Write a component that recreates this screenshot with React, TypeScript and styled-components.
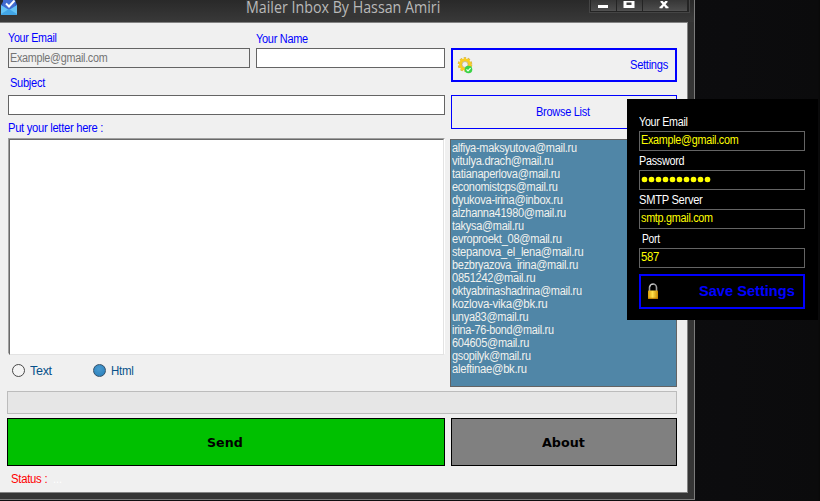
import React, { useLayoutEffect, useRef, useState } from "react";
import styled, { createGlobalStyle } from "styled-components";

const GlobalStyle = createGlobalStyle`
  * { box-sizing: border-box; }
  html, body { margin: 0; padding: 0; overflow: hidden; }
  body { background: #0c0c0e; font-family: "Liberation Sans", Arial, sans-serif; font-size: 12px; line-height: 14px; letter-spacing: -0.3px; }
`;

const Desktop = styled.div`
  position: relative;
  width: 820px;
  height: 501px;
  overflow: hidden;
  background: linear-gradient(90deg, #101012 0, #0c0c0e 730px, #0b0b0c 818px, #080808 820px);
`;

const Window = styled.main`
  width: 695px;
  height: 500px;
  background: #353535;
  border-right: 1px solid #7b7b7b;
  border-bottom: 1px solid #7b7b7b;
`;

const TitleBar = styled.header`
  display: flex;
  height: 22px;
  background: linear-gradient(#292929, #393939);
`;

const AppIcon = styled.svg`
  display: block;
  width: 246px;
  height: 17px;
  flex: none;
`;

const Title = styled.h1`
  margin: 0;
  width: 194px;
  height: 16px;
  background: #363636;
  color: #b9b9b9;
  font: 400 15.5px/15px "Open Sans", "Noto Sans", sans-serif;
  letter-spacing: 0;
`;

const Controls = styled.div`
  display: flex;
  gap: 1px;
  height: 13px;
  margin-left: 149px;
  padding: 0 2px 1px 1px;
  background: #242424;
  border: 1px solid #454545;
  border-top: 0;
`;

const ControlButton = styled.button<{ $width: number }>`
  display: block;
  width: ${(p) => p.$width}px;
  height: 11px;
  padding: 0 2px 0 0;
  border: 0;
  border-bottom: 1px solid #505050;
  background: linear-gradient(#363636, #4b4b4b);
  svg { display: block; margin: 0 auto; }
`;

const Client = styled.section`
  display: flex;
  flex-direction: column;
  width: 688px;
  height: 471px;
  background: #f0f0f0;
  border: 1px solid #838383;
  border-left: 0;
`;

const Columns = styled.div`
  display: grid;
  grid-template-columns: 437px 227px;
  column-gap: 5px;
  padding-left: 8px;
  height: 368px;
`;

const Column = styled.div`
  display: flex;
  flex-direction: column;
  min-width: 0;
`;

const Pair = styled.div`
  display: grid;
  grid-template-columns: 242px 189px;
  gap: 6px;
`;

const Caption = styled.label<{ $height: number; $top: number; $left?: number; $light?: boolean }>`
  display: block;
  height: ${(p) => p.$height}px;
  padding: ${(p) => p.$top}px 0 0 ${(p) => p.$left ?? 0}px;
  color: ${(p) => (p.$light ? "#fff" : "#00f")};
`;

const Field = styled.div<{ $disabled?: boolean; $dark?: boolean }>`
  height: 20px;
  padding: ${(p) => (p.$dark ? 1 : 2)}px 0 0 1px;
  border: 1px solid #646464;
  background: ${(p) => (p.$dark ? "#000" : p.$disabled ? "#f0f0f0" : "#fff")};
  color: ${(p) => (p.$dark ? "#ff0" : "#747474")};
`;

const Letter = styled.div`
  height: 216px;
  background: #fff;
  border: 1px solid;
  border-color: #a0a0a0 #fff #fff #a0a0a0;
  &::before {
    content: "";
    display: block;
    height: 100%;
    border: 1px solid;
    border-color: #696969 #e3e3e3 #e3e3e3 #696969;
  }
`;

const Radios = styled.div`
  display: flex;
  padding: 10px 0 0 4px;
  color: #07508a;
`;

const RadioOption = styled.label`
  display: flex;
  gap: 5px;
  width: 81px;
`;

const RadioMark = styled.span<{ $checked?: boolean }>`
  width: 13px;
  height: 13px;
  border-radius: 50%;
  border: 1px solid ${(p) => (p.$checked ? "#35516a" : "#484848")};
  background: ${(p) => (p.$checked ? "radial-gradient(circle at 45% 35%, #4a9bd0, #2d82bd 80%)" : "#f4f4f4")};
`;

const OutlineButton = styled.button<{ $border: number; $gap: number; $dark?: boolean }>`
  display: flex;
  align-items: center;
  justify-content: ${(p) => (p.$border > 1 ? "space-between" : "center")};
  height: ${(p) => (p.$dark ? 35 : 34)}px;
  margin: ${(p) => p.$gap}px 0 0 ${(p) => (p.$dark ? 0 : 1)}px;
  padding: 0 ${(p) => (p.$border > 1 ? (p.$dark ? 8 : 7) : 2)}px ${(p) => (p.$dark ? 1 : 0)}px ${(p) => (p.$border > 1 ? 4 : 0)}px;
  background: ${(p) => (p.$dark ? "#000" : "#f0f0f0")};
  border: ${(p) => p.$border}px solid #00f;
  color: #00f;
  font: ${(p) => (p.$dark ? "700 14px/16px" : "400 12px/14px")} "Liberation Sans", Arial, sans-serif;
  letter-spacing: ${(p) => (p.$dark ? "0" : "-0.3px")};
  ${(p) => (p.$dark ? "width: 166px;" : "")}
`;

const Recipients = styled.ul`
  height: 248px;
  margin: 10px 0 0;
  padding: 1px 0 0 0.5px;
  list-style: none;
  background: #5086a7;
  border: 1px solid #646464;
  color: #f2f2ee;
  li { height: 13px; }
`;

const Progress = styled.div`
  width: 670px;
  height: 23px;
  margin-left: 7px;
  background: #e6e6e6;
  border: 1px solid #bcbcbc;
`;

const Actions = styled.div`
  display: grid;
  grid-template-columns: 438px 226px;
  gap: 6px;
  padding: 4px 0 0 7px;
`;

const ActionButton = styled.button<{ $color: string }>`
  display: flex;
  align-items: center;
  justify-content: center;
  height: 48px;
  padding: 2px 2px 0 0;
  background: ${(p) => p.$color};
  border: 1px solid #000;
  color: #000;
  font: 700 13px/16px "DejaVu Sans", Verdana, sans-serif;
  letter-spacing: 0;
`;

const StatusLine = styled.div`
  display: flex;
  gap: 6px;
  padding: 6px 0 0 11px;
  color: #f00;
`;

const StatusValue = styled.span`
  color: #fff;
  letter-spacing: 0;
`;

const SettingsPanel = styled.aside`
  position: absolute;
  left: 627px;
  top: 99px;
  width: 191px;
  height: 221px;
  padding: 0 13px 0 12px;
  background: #000;
`;

const Dots = styled.div`
  display: flex;
  gap: 2px;
  padding: 5px 0 0 1px;
  i { width: 5px; height: 5px; border-radius: 50%; background: #ff0; box-shadow: 0 0 0 0.3px #ff0; }
`;

const FitBox = styled.span<{ $width: number }>`
  display: block;
  flex: none;
  width: ${(p) => p.$width}px;
  white-space: pre;
  text-align: left;
`;

const FitInner = styled.span`
  display: inline-block;
  vertical-align: top;
  transform-origin: 0 0;
`;

/** Condenses or widens a line of text so that it fills a given width. */
function Fit({ width, children }: { width: number; children: string }) {
  const ref = useRef<HTMLSpanElement>(null);
  const [scale, setScale] = useState(1);
  useLayoutEffect(() => {
    if (ref.current) setScale(width / ref.current.offsetWidth);
  }, [width, children]);
  return (
    <FitBox $width={width}>
      <FitInner ref={ref} style={{ transform: `scaleX(${scale})` }}>{children}</FitInner>
    </FitBox>
  );
}

const recipients: [string, number][] = [
  ["alfiya-maksyutova@mail.ru", 125],
  ["vitulya.drach@mail.ru", 101],
  ["tatianaperlova@mail.ru", 108],
  ["economistcps@mail.ru", 106],
  ["dyukova-irina@inbox.ru", 111],
  ["alzhanna41980@mail.ru", 114],
  ["takysa@mail.ru", 72],
  ["evroproekt_08@mail.ru", 110],
  ["stepanova_el_lena@mail.ru", 131],
  ["bezbryazova_irina@mail.ru", 126],
  ["0851242@mail.ru", 83],
  ["oktyabrinashadrina@mail.ru", 130],
  ["kozlova-vika@bk.ru", 95],
  ["unya83@mail.ru", 76],
  ["irina-76-bond@mail.ru", 102],
  ["604605@mail.ru", 77],
  ["gsopilyk@mail.ru", 79],
  ["aleftinae@bk.ru", 75],
];

const MailIcon = () => (
  <AppIcon viewBox="0 0 246 17">
    <path d="M1 5 4 0h11l2 5v9H1z" fill="#315fc4" />
    <path d="M3 0h12v8l-6 4-6-4z" fill="#416bd0" />
    <path d="M1 5l8 5 8-5v9q0 1-1 1H2q-1 0-1-1z" fill="#65c3f5" />
    <path d="M1 14 9 9l8 5v1H1z" fill="#42a5e5" />
    <path d="m6 3.5 3 3L14.5.5" fill="none" stroke="#fff" strokeWidth="2" />
  </AppIcon>
);

const GearIcon = () => (
  <svg width="16" height="17" viewBox="0 0 16 17">
    <circle cx="8" cy="7.5" r="6.3" fill="none" stroke="#bda568" strokeWidth="2" strokeDasharray="2.3 1.66" />
    <circle cx="8" cy="7.5" r="4.5" fill="none" stroke="#f8cd22" strokeWidth="3" />
    <circle cx="8" cy="7.5" r="6.2" fill="none" stroke="#f8cd22" strokeWidth="1.4" strokeDasharray="2.2 1.7" />
    <circle cx="8" cy="7.5" r="3" fill="#f0f0f0" stroke="#b8a66c" strokeWidth=".7" />
    <circle cx="11.5" cy="12.5" r="3.8" fill="#3bd347" />
    <path d="m9.5 12.4 1.5 1.5 2.6-2.8" fill="none" stroke="#efffef" strokeWidth="1.3" />
  </svg>
);

const LockIcon = () => (
  <svg width="16" height="16" viewBox="0 0 16 16">
    <defs>
      <linearGradient id="brass">
        <stop stopColor="#d99c09" />
        <stop offset=".45" stopColor="#ffe04b" />
        <stop offset="1" stopColor="#c78900" />
      </linearGradient>
    </defs>
    <path d="M4.5 8V4.5a3.5 3.5 0 0 1 7 0V8" fill="none" stroke="#a0a0a0" strokeWidth="1.6" />
    <path d="M4.7 4.2A3.5 3.5 0 0 1 8.5 1.1" fill="none" stroke="#ddd" strokeWidth=".8" />
    <rect x="3" y="7.5" width="10" height="8.5" rx=".7" fill="url(#brass)" />
    <path d="M3 15.3h10" stroke="#b87900" />
  </svg>
);

export default function App() {
  return (
    <Desktop>
      <GlobalStyle />
      <Window>
        <TitleBar>
          <MailIcon />
          <Title><Fit width={194}>Mailer Inbox By Hassan Amiri</Fit></Title>
          <Controls>
            <ControlButton $width={25} aria-label="Minimize">
              <svg width="12" height="8"><path d="M1 4h10v3H1z" fill="#fff" /></svg>
            </ControlButton>
            <ControlButton $width={25} aria-label="Maximize">
              <svg width="12" height="8"><path d="M2 0v5.5h8V0M2 0h8" fill="none" stroke="#fff" strokeWidth="3" /></svg>
            </ControlButton>
            <ControlButton $width={44} aria-label="Close">
              <svg width="12" height="8"><path d="m3 0 6 6.5M9 0 3 6.5" stroke="#fff" strokeWidth="2.4" /><path d="M1.5 6.5h3m3 0h3" stroke="#fff" strokeWidth="1.5" /></svg>
            </ControlButton>
          </Controls>
        </TitleBar>
        <Client>
          <Columns>
            <Column>
              <Pair>
                <div>
                  <Caption $height={25} $top={8}><Fit width={49}>Your Email</Fit></Caption>
                  <Field $disabled><Fit width={97}>Example@gmail.com</Fit></Field>
                </div>
                <div>
                  <Caption $height={25} $top={9}><Fit width={52}>Your Name</Fit></Caption>
                  <Field />
                </div>
              </Pair>
              <Caption $height={27} $top={8} $left={2}><Fit width={35}>Subject</Fit></Caption>
              <Field />
              <Caption $height={23} $top={6}><Fit width={95}>Put your letter here :</Fit></Caption>
              <Letter />
              <Radios>
                <RadioOption><RadioMark /><Fit width={22}>Text</Fit></RadioOption>
                <RadioOption><RadioMark $checked /><Fit width={22}>Html</Fit></RadioOption>
              </Radios>
            </Column>
            <Column>
              <OutlineButton $border={2} $gap={25}><GearIcon /><Fit width={38}>Settings</Fit></OutlineButton>
              <OutlineButton $border={1} $gap={13}><Fit width={54}>Browse List</Fit></OutlineButton>
              <Recipients>
                {recipients.map(([address, width]) => (
                  <li key={address}><Fit width={width}>{address}</Fit></li>
                ))}
              </Recipients>
            </Column>
          </Columns>
          <Progress />
          <Actions>
            <ActionButton $color="#00c000"><Fit width={36}>Send</Fit></ActionButton>
            <ActionButton $color="#808080"><Fit width={43}>About</Fit></ActionButton>
          </Actions>
          <StatusLine><Fit width={36}>Status :</Fit><StatusValue><Fit width={9}>...</Fit></StatusValue></StatusLine>
        </Client>
      </Window>
      <SettingsPanel>
        <Caption $light $height={32} $top={16}><Fit width={49}>Your Email</Fit></Caption>
        <Field $dark><Fit width={97}>Example@gmail.com</Fit></Field>
        <Caption $light $height={19} $top={3}><Fit width={45}>Password</Fit></Caption>
        <Field $dark><Dots>{Array.from({ length: 10 }, (_, i) => <i key={i} />)}</Dots></Field>
        <Caption $light $height={19} $top={3}><Fit width={64}>SMTP Server</Fit></Caption>
        <Field $dark><Fit width={72}>smtp.gmail.com</Fit></Field>
        <Caption $light $height={19} $top={3} $left={3}><Fit width={18}>Port</Fit></Caption>
        <Field $dark><Fit width={18}>587</Fit></Field>
        <OutlineButton $dark $border={2} $gap={6}><LockIcon /><Fit width={96}>Save Settings</Fit></OutlineButton>
      </SettingsPanel>
    </Desktop>
  );
}
